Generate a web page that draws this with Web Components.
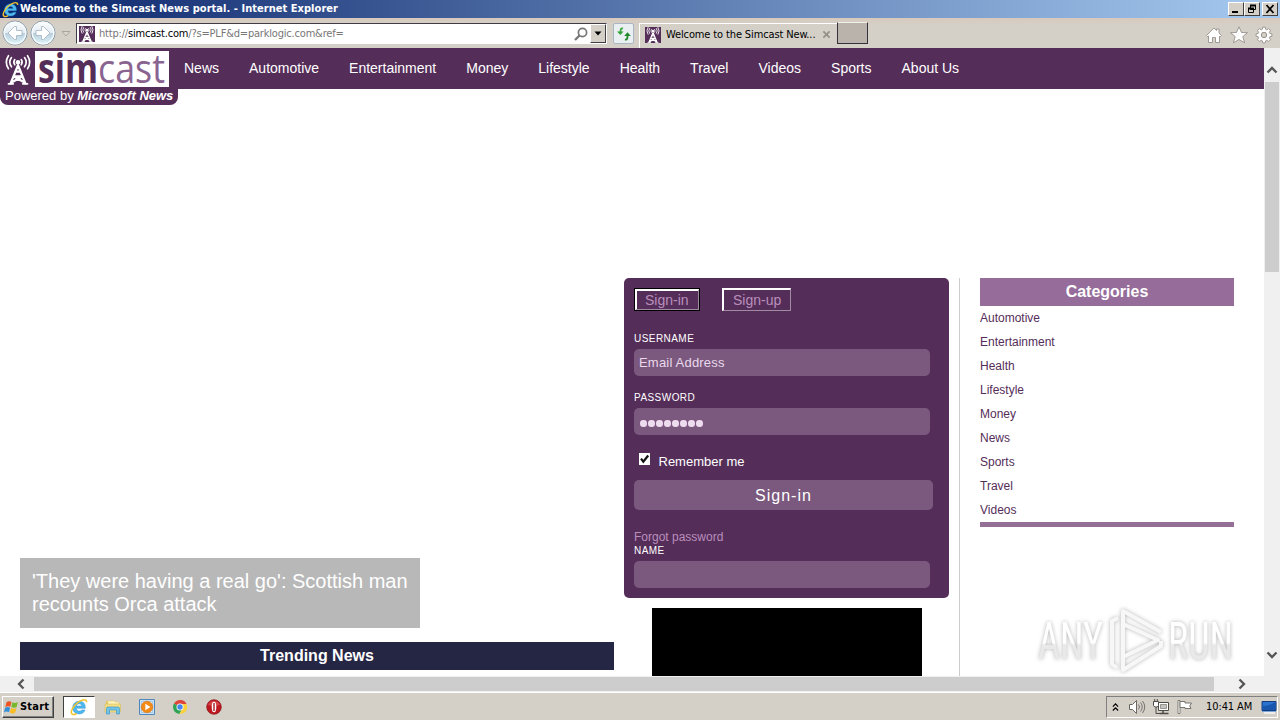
<!DOCTYPE html>
<html lang="en">

<head>
    <meta charset="utf-8">
    <title>Welcome to the Simcast News portal.</title>
    <style>
        body {
            margin: 0;
            width: 1280px;
            height: 720px;
            overflow: hidden;
            font-family: "Liberation Sans", Arial, sans-serif;
            background: #d4d0c8;
        }
    </style>
</head>

<body>
    <desktop-screen>
        <title-bar slot="title">Welcome to the Simcast News portal. - Internet Explorer</title-bar>
        <tool-bar slot="tools"></tool-bar>
        <news-page slot="page"></news-page>
        <task-bar slot="tasks"></task-bar>
    </desktop-screen>
</body>
<script>
    // small base class: every element just renders its own markup in a shadow root
    class BaseElement extends HTMLElement {
        constructor() {
            super();
            this.shadow = this.attachShadow({ mode: 'open' });
        }
        connectedCallback() {
            this.shadow.innerHTML = this.render();
        }
    }

    const antenna = `
        <g fill="none" stroke="currentColor" stroke-linecap="round">
            <path stroke-width="2.6" d="M13 12 4.5 33M13 12l8.500 21M7.600 25h10.800M5.500 32l12.300-7M20.500 32 8.200 25M9.800 19.500h6.400"/>
            <path stroke-width="1.900" d="M9.300 5.500q-2.200 3 0 6M16.700 5.500q2.200 3 0 6M5.500 3.200q-4 5.300 0 10.600M20.500 3.200q4 5.300 0 10.600M2 1q-5 7.500 0 15M24 1q5 7.500 0 15"/>
            <path stroke-width="2" d="M2 33.500h5.500M18.500 33.500H24"/>
        </g>
        <circle cx="13" cy="8.5" r="2.6" fill="currentColor"/>`;

    const icons = {
        antenna: ['-2 0 30 35', antenna],
        ie: ['0 0 18 18', `
            <path d="M15.300 10.300H6.300c.2 1.900 1.300 2.800 3 2.800 1.200 0 2-.5 2.500-1.200h3.200c-.8 2.600-3 4-5.800 4-3.800 0-6.500-2.400-6.500-6.200s2.700-6.500 6.500-6.500c4 0 6.500 2.800 6.100 7.100zM6.400 8h5.400c-.2-1.400-1.200-2.200-2.600-2.200S6.700 6.600 6.400 8z" fill="#4db9ee" stroke="#1f7fc8" stroke-width=".4"/>
            <path d="M2.500 16.300C-.8 14.500 3.600 7 9 3.700c4-2.500 7.800-3 7.600.5M2.500 16.300c1 .6 2.500.1 4-.8" fill="none" stroke="#f2c32d" stroke-width="1.500"/>`],
        back: ['0 0 26 26', `
            <defs><linearGradient id="g" x2="0" y2="1"><stop stop-color="#fff"/><stop offset=".48" stop-color="#e3ebf2"/><stop offset=".52" stop-color="#b9cfdd"/><stop offset="1" stop-color="#e2f8fc"/></linearGradient></defs>
            <circle cx="13" cy="13" r="12" fill="url(#g)" stroke="#8293a4"/><circle cx="13" cy="13" r="10.800" fill="none" stroke="#f3fafc" stroke-width="1.400"/>
            <path d="m12.500 6.500-6.500 6.500 6.500 6.500h2v-4h5.500v-5h-5.500v-4z" fill="#fff" stroke="#9fb2c0" stroke-width=".8"/>`],
        caret: ['0 0 10 8', '<path d="M1 1.500h8L5 6z" fill="#d9d6cf" stroke="#aaa69e"/>'],
        search: ['0 0 14 14', '<circle cx="8.500" cy="5.500" r="4.100" fill="none" stroke="#777" stroke-width="1.700"/><path d="m5.500 8.500-4.500 4.500" stroke="#777" stroke-width="2.300"/>'],
        refresh: ['0 0 16 16', '<path d="M7 2.500C4.500 2 4.500 4 4.500 6" fill="none" stroke="#3fa844" stroke-width="1.800"/><path d="M1 5.500h6.600L4.300 9z" fill="#34a13a"/><path d="M9 13.500c2.500.5 2.500-1.500 2.500-4" fill="none" stroke="#20872b" stroke-width="1.800"/><path d="M8.200 10h6.600L11.500 6.300z" fill="#20872b"/>'],
        close: ['0 0 10 10', '<path d="m1.500 1.500 7 7m0-7-7 7" stroke="#969188" stroke-width="2"/>'],
        home: ['0 0 18 18', '<path d="M1.500 9.500 9 2l2.500 2.500V3H14v4l2.500 2.500-1.300 1.200-.7-.7v6.500h-4v-5h-3v5h-4V10l-.7.700z" fill="#fff" stroke="#96918a" stroke-width=".9"/>'],
        star: ['0 0 18 18', '<path d="m9 .8 2.500 5.700 6 .2-4.700 3.900 1.800 6.200L9 13.500l-5.600 3.300 1.800-6.200L.5 6.700l6-.2z" fill="#fff" stroke="#96918a" stroke-width=".9"/>'],
        gear: ['0 0 18 18', `
            <path d="m7.700 1.200-.4 2.100-1.100.5-1.900-1.200-1.800 1.800 1.200 1.900-.5 1.100-2.100.4v2.500l2.100.4.5 1.100-1.200 1.900 1.800 1.800 1.900-1.200 1.100.5.400 2.100h2.600l.4-2.100 1.100-.5 1.900 1.200 1.800-1.800-1.200-1.900.5-1.100 2.100-.4V7.800l-2.100-.4-.5-1.100 1.200-1.900-1.800-1.800-1.900 1.200-1.100-.5-.4-2.100z" fill="#fff" stroke="#96918a" stroke-width=".9"/>
            <circle cx="9" cy="9" r="2.700" fill="#d4d0c8" stroke="#96918a"/>`],
        up: ['0 0 12 8', '<path d="m1.500 6.500 4.500-4.500 4.500 4.500" fill="none" stroke="#555" stroke-width="2.300"/>'],
        windows: ['0 0 16 15', '<path d="M2.500 2.200Q5 .5 7.500 2L6.300 6.700Q4 5.500 1.300 7z" fill="#ed5423"/><path d="M8.400 2.300q2.500 1.500 5.500-.2l-1.200 4.800q-2.700 1.500-5.400 0z" fill="#79b82d"/><path d="M1.100 7.800q2.700-1.500 5 0L5 12.300q-2.500-1.500-5 .2z" fill="#328fd8"/><path d="M7 8.100q2.800 1.400 5.500-.2l-1.300 4.900q-2.700 1.500-5.400-.2z" fill="#fbbd22"/>'],
        folder: ['0 0 18 18', '<path d="M2 3h5l1 1.500h6V9H2z" fill="#e7c65a"/><path d="M4 3h6l1 1h4v6H3z" fill="#fff6bd" stroke="#dfc769" stroke-width=".6"/><path d="M1 6h15.500v8H1z" fill="#f6df82" stroke="#d4bb61" stroke-width=".6"/><path d="M2.500 16V10.500q0-1.500 1.500-1.500h10q1.500 0 1.500 1.500V16h-3v-4h-7v4z" fill="#74c3e8" stroke="#399aca" stroke-width=".7"/>'],
        player: ['0 0 18 18', '<path d="M1.500 1.500h15v15h-15z" fill="#c8e1f5" stroke="#4f88bd"/><path d="M3.500 3.500h11v11h-11z" fill="#e8f1f8" stroke="#8ab3d4" stroke-width=".6"/><circle cx="9" cy="9" r="5.800" fill="#f28a16" stroke="#d96d0b" stroke-width=".5"/><path d="M7.300 5.700v6.600L12.500 9z" fill="#fff"/>'],
        chrome: ['0 0 18 18', '<path d="M9 9 3 5.500A7 7 0 0 1 15.500 6H9z" fill="#de4437"/><path d="M9 9 3 5.500A7 7 0 0 0 8.300 16L11.600 10.500z" fill="#2fa454"/><path d="M9 6h6.500A7 7 0 0 1 8.300 16l3.300-5.500z" fill="#f9d13d"/><circle cx="9" cy="9" r="3.500" fill="#fff"/><circle cx="9" cy="9" r="2.700" fill="#4688ee"/>'],
        opera: ['0 0 18 18', '<circle cx="9" cy="9" r="7.300" fill="#bd1720" stroke="#8b1216" stroke-width=".7"/><path d="M3 7a6.500 6.500 0 0 1 12 0q-6 2-12 0z" fill="#e56360" opacity=".6"/><ellipse cx="9" cy="9" rx="2.300" ry="5.300" fill="#fff"/><path d="M8.300 5h1.400v8H8.300z" fill="#a51a20"/>'],
        more: ['0 0 8 10', '<path d="m1 4.500 3-3 3 3m-6 4.500 3-3 3 3" fill="none" stroke="#000" stroke-width="1.400"/>'],
        sound: ['0 0 18 18', '<path d="M1.500 6.500h3l4-4v13l-4-4h-3z" fill="#fff" stroke="#6b6761"/><path d="M10.500 6.500q2 2.500 0 5M12.500 4.500q3.500 4.500 0 9M14.500 3q4.500 6 0 12" fill="none" stroke="#77736d"/>'],
        network: ['0 0 18 18', '<path d="M6.500 4.500h10v8h-10z" fill="#fff" stroke="#4e4b47"/><path d="M8.500 6.500h6v4h-6z" fill="#c5c3bd" stroke="#77736d" stroke-width=".7"/><path d="M11 12.500V15M7.500 15.500h9" stroke="#4e4b47" stroke-width="1.500"/><path d="M1.500 3.500h5v4l-1.300 1.500H2.800L1.500 7.500z" fill="#fff" stroke="#4e4b47"/><path d="M2.700 1v2.500M5.300 1v2.500M4 9v6.500h5" fill="none" stroke="#4e4b47"/>'],
        flag: ['0 0 18 18', '<path d="M2 2.500h2v13H2z" fill="#fff" stroke="#6b6761" stroke-width=".8"/><path d="M4 3.500h5v1.500h6.500l-1.800 3 1.300 2.500H9V9.500H4z" fill="#fff" stroke="#6b6761" stroke-width=".9"/>'],
        desktop: ['0 0 16 14', '<path d="M1 1.500h14v9H1z" fill="#2b72cf" stroke="#183b7c"/><path d="M1.500 10V6q7 0 13-4v8z" fill="#1957ae"/><path d="M3 13h11" stroke="#f7f7f7" stroke-width="1.500"/><path d="M1 11.500h14" stroke="#79a7dc"/>'],
        check: ['0 0 13 13', '<path d="M1 0h11v12H1z" fill="#fff"/><path d="m3 5.700 2.300 3L10.200 2.500" fill="none" stroke="#111" stroke-width="2.200"/>'],
        min: ['0 0 12 10', '<path d="M2 8h6" stroke="#000" stroke-width="2"/>'],
        restore: ['0 0 12 10', '<path d="M4.500 1.500h5v4h-5zM2.500 4.500h5v4h-5z" fill="#d4d0c8" stroke="#000"/><path d="M4 1.500h6M2 4.500h6" stroke="#000" stroke-width="1.800"/>'],
        exit: ['0 0 12 10', '<path d="m2.500 1 7 8m0-8-7 8" stroke="#000" stroke-width="1.800"/>'],
        drop: ['0 0 8 5', '<path d="M.5.500h7L4 4.500z" fill="#000"/>']
    };

    class PixelIcon extends BaseElement {
        render() {
            const [box, body] = icons[this.getAttribute('name')];
            const w = this.getAttribute('w') || 18;
            const h = this.getAttribute('h') || w;
            return `
            <style>
                :host { display: block; flex: none; width: ${w}px; height: ${h}px; }
                svg { display: block; overflow: visible; }
            </style>
            <svg width="${w}" height="${h}" viewBox="${box}">${body}</svg>`;
        }
    }
    customElements.define('pixel-icon', PixelIcon);

    class DesktopScreen extends BaseElement {
        render() {
            return `
            <style>
                :host {
                    display: grid;
                    grid-template-rows: 18px 30px 644px 28px;
                    width: 1280px;
                    height: 720px;
                }
            </style>
            <slot name="title"></slot>
            <slot name="tools"></slot>
            <slot name="page"></slot>
            <slot name="tasks"></slot>`;
        }
    }
    customElements.define('desktop-screen', DesktopScreen);

    class TitleBar extends BaseElement {
        render() {
            return `
            <style>
                :host {
                    display: flex;
                    box-sizing: border-box;
                    height: 18px;
                    padding: 0 2px;
                    align-items: center;
                    background: linear-gradient(90deg, #0a246a, #a6caf0);
                    color: #fff;
                    font: bold 11px/18px "DejaVu Sans Condensed", "DejaVu Sans", sans-serif;
                    font-stretch: condensed;
                    white-space: nowrap;
                }
                .text { flex: 1; padding-left: 1px; letter-spacing: .04px; }
                .btn {
                    box-sizing: border-box;
                    width: 16px;
                    height: 14px;
                    padding: 1px;
                    background: #d4d0c8;
                    border: 1px solid;
                    border-color: #fff #404040 #404040 #fff;
                }
                .last { margin-left: 2px; }
            </style>
            <pixel-icon name="ie" w="17"></pixel-icon>
            <span class="text"><slot></slot></span>
            <span class="btn"><pixel-icon name="min" w="12" h="10"></pixel-icon></span>
            <span class="btn"><pixel-icon name="restore" w="12" h="10"></pixel-icon></span>
            <span class="btn last"><pixel-icon name="exit" w="12" h="10"></pixel-icon></span>`;
        }
    }
    customElements.define('title-bar', TitleBar);

    class FavIcon extends BaseElement {
        render() {
            return `
            <style>
                :host { display: flex; flex: none; width: 16px; height: 16px; justify-content: center; background: #552d59; color: #fff; }
            </style>
            <pixel-icon name="antenna" w="14" h="16"></pixel-icon>`;
        }
    }
    customElements.define('fav-icon', FavIcon);

    class ToolBar extends BaseElement {
        render() {
            return `
            <style>
                :host {
                    display: flex;
                    box-sizing: border-box;
                    height: 30px;
                    padding: 0 7px 0 2px;
                    background: linear-gradient(#d8cabd, #d4d0c8 8px);
                    font: 11px/18px "DejaVu Sans Condensed", "DejaVu Sans", sans-serif;
                    font-stretch: condensed;
                    white-space: nowrap;
                }
                .nav { display: flex; width: 74px; padding-top: 2px; box-sizing: border-box; }
                .nav pixel-icon { margin-right: 2px; }
                .nav .fwd { transform: scaleX(-1); }
                .nav .caret { margin: 10px 0 0 3px; }
                .address {
                    display: flex;
                    box-sizing: border-box;
                    width: 531px;
                    height: 21px;
                    margin-top: 5px;
                    padding: 0 0 0 2px;
                    align-items: center;
                    background: #fff;
                    border: 1px solid #fff;
                    border-top: 1px solid #403c45;
                    border-left: 1px solid #403c45;
                    color: #777;
                }
                .url { flex: 1; padding-left: 4px; letter-spacing: -.19px; }
                .url b { font-weight: normal; color: #000; }
                .drop {
                    display: flex;
                    align-items: center;
                    justify-content: center;
                    width: 14px;
                    height: 17px;
                    margin-left: 2px;
                    background: #d4d0c8;
                    border: 1px solid;
                    border-color: #fff #404040 #404040 #fff;
                }
                .refresh {
                    display: flex;
                    box-sizing: border-box;
                    width: 21px;
                    height: 21px;
                    margin: 5px 0 0 6px;
                    align-items: center;
                    justify-content: center;
                    background: #eaf0f1;
                    border: 1px solid #a9b6c4;
                    border-radius: 2px;
                }
                .tab {
                    display: flex;
                    box-sizing: border-box;
                    width: 198px;
                    height: 25px;
                    margin: 5px 0 0 5px;
                    padding: 0 6px 3px 5px;
                    align-items: center;
                    border-top: 1px solid #fff;
                    border-left: 1px solid #fff;
                }
                .tab span { flex: 1; padding-left: 5px; letter-spacing: -.13px; }
                .blank {
                    box-sizing: border-box;
                    width: 31px;
                    height: 22px;
                    margin-top: 4px;
                    background: #bab3ab;
                    border: 1px solid #35313a;
                    border-top-color: #f2eee8;
                }
                .tools { display: flex; flex: 1; gap: 7px; justify-content: flex-end; padding-top: 8px; }
            </style>
            <div class="nav">
                <pixel-icon name="back" w="26"></pixel-icon>
                <pixel-icon class="fwd" name="back" w="26"></pixel-icon>
                <pixel-icon class="caret" name="caret" w="10" h="8"></pixel-icon>
            </div>
            <div class="address">
                <fav-icon></fav-icon>
                <span class="url">http://<b>simcast.com</b>/?s=PLF&amp;d=parklogic.com&amp;ref=</span>
                <pixel-icon name="search" w="14"></pixel-icon>
                <span class="drop"><pixel-icon name="drop" w="8" h="5"></pixel-icon></span>
            </div>
            <div class="refresh"><pixel-icon name="refresh" w="16"></pixel-icon></div>
            <div class="tab">
                <fav-icon></fav-icon>
                <span>Welcome to the Simcast New...</span>
                <pixel-icon name="close" w="9"></pixel-icon>
            </div>
            <div class="blank"></div>
            <div class="tools">
                <pixel-icon name="home" w="18"></pixel-icon>
                <pixel-icon name="star" w="18"></pixel-icon>
                <pixel-icon name="gear" w="18"></pixel-icon>
            </div>`;
        }
    }
    customElements.define('tool-bar', ToolBar);

    // the page with both of its scrollbars
    class NewsPage extends BaseElement {
        render() {
            return `
            <style>
                :host {
                    display: grid;
                    position: relative;
                    grid-template: 628px 16px / 1264px 16px;
                    background: #f0f0f0;
                }
                .view { background: #fff; height: 628px; }
                .columns { display: flex; box-sizing: border-box; height: 587px; overflow: hidden; padding: 189px 0 0 20px; }
                .left { width: 594px; padding-top: 280px; }
                .middle { width: 325px; margin: 0 10px; }
                .ad { width: 270px; height: 100px; margin: 10px 0 0 28px; background: #000; }
                .right { width: 254px; height: 450px; padding-left: 20px; border-left: 1px solid #ccc; }
                .vbar, .hbar { display: flex; align-items: center; }
                .vbar { flex-direction: column; }
                .vbar .thumb { width: 14px; height: 190px; margin: 8px 0 379px; background: #cdcdcd; }
                .vbar .first { margin-top: 18px; }
                .down { transform: rotate(180deg); }
                .hbar { padding-left: 15px; }
                .hbar .thumb { width: 1180px; height: 14px; margin: 0 22px 0 7px; background: #cdcdcd; }
                .prev { transform: rotate(-90deg); }
                .next { transform: rotate(90deg); }
            </style>
            <div class="view">
                <site-header></site-header>
                <div class="columns">
                    <div class="left">
                        <hero-story>'They were having a real go': Scottish man recounts Orca attack</hero-story>
                        <section-title style="--bar: #252544; margin-top: 14px">Trending News</section-title>
                    </div>
                    <div class="middle">
                        <login-panel></login-panel>
                        <div class="ad"></div>
                    </div>
                    <div class="right">
                        <category-list></category-list>
                    </div>
                </div>
            </div>
            <div class="vbar">
                <pixel-icon class="first" name="up" w="12" h="8"></pixel-icon>
                <div class="thumb"></div>
                <pixel-icon class="down" name="up" w="12" h="8"></pixel-icon>
            </div>
            <div class="hbar">
                <pixel-icon class="prev" name="up" w="12" h="8"></pixel-icon>
                <div class="thumb"></div>
                <pixel-icon class="next" name="up" w="12" h="8"></pixel-icon>
            </div>
            <any-watermark></any-watermark>`;
        }
    }
    customElements.define('news-page', NewsPage);

    class SiteHeader extends BaseElement {
        render() {
            const links = ['News', 'Automotive', 'Entertainment', 'Money', 'Lifestyle', 'Health', 'Travel', 'Videos', 'Sports', 'About Us'];
            return `
            <style>
                :host { display: block; position: relative; height: 41px; background: #552d59; color: #fff; }
                nav { display: flex; gap: 30px; padding-left: 184px; font-size: 14px; line-height: 41px; }
                /* the logo hangs below the bar */
                .logo {
                    position: absolute;
                    left: 0;
                    top: 0;
                    box-sizing: border-box;
                    width: 178px;
                    height: 57px;
                    padding: 3px 0 0 5px;
                    background: #552d59;
                    border-radius: 0 0 8px 8px;
                }
                .row { display: flex; gap: 4px; }
                .row pixel-icon { margin-top: 2px; }
                .name { width: 134px; height: 36px; background: #fff; }
                .name svg { display: block; overflow: visible; }
                .name text { font: 41px "Open Sans", "Noto Sans", sans-serif; fill: #8a6490; }
                .name .bold { font-weight: bold; fill: #552d59; }
                .by { padding-top: 1px; font-size: 13px; line-height: 16px; white-space: nowrap; }
            </style>
            <nav>${links.map(l => `<span>${l}</span>`).join('')}</nav>
            <div class="logo">
                <div class="row">
                    <pixel-icon name="antenna" w="26" h="34"></pixel-icon>
                    <div class="name">
                        <svg width="134" height="36">
                            <text class="bold" x="3" y="32" textLength="60" lengthAdjust="spacingAndGlyphs">sim</text>
                            <text x="63" y="32" textLength="67" lengthAdjust="spacingAndGlyphs">cast</text>
                        </svg>
                    </div>
                </div>
                <div class="by">Powered by <b><i>Microsoft News</i></b></div>
            </div>`;
        }
    }
    customElements.define('site-header', SiteHeader);

    class HeroStory extends BaseElement {
        render() {
            return `
            <style>
                :host {
                    display: block;
                    box-sizing: border-box;
                    width: 400px;
                    height: 70px;
                    padding: 12px;
                    background: #b8b8b8;
                    color: #fff;
                    font-size: 20px;
                    line-height: 23px;
                }
            </style>
            <slot></slot>`;
        }
    }
    customElements.define('hero-story', HeroStory);

    class SectionTitle extends BaseElement {
        render() {
            return `
            <style>
                :host {
                    display: block;
                    height: 28px;
                    background: var(--bar);
                    color: #fff;
                    font-size: 16px;
                    font-weight: bold;
                    line-height: 27px;
                    text-align: center;
                }
            </style>
            <slot></slot>`;
        }
    }
    customElements.define('section-title', SectionTitle);

    class FormField extends BaseElement {
        render() {
            return `
            <style>
                :host { display: block; width: 296px; }
                label { display: block; box-sizing: border-box; height: 17px; padding-top: 1px; color: #fff; font-size: 10px; line-height: 12px; letter-spacing: .45px; }
                .box {
                    box-sizing: border-box;
                    height: 27px;
                    padding-left: 5px;
                    background: #7b597e;
                    border-radius: 5px;
                    color: #ead9ec;
                    font-size: 13px;
                    line-height: 27px;
                    letter-spacing: .2px;
                }
            </style>
            <label>${this.getAttribute('label')}</label>
            <div class="box"><slot></slot></div>`;
        }
    }
    customElements.define('form-field', FormField);

    class LoginPanel extends BaseElement {
        render() {
            return `
            <style>
                :host {
                    display: block;
                    box-sizing: border-box;
                    height: 320px;
                    padding: 10px 10px 0;
                    background: #552d59;
                    border-radius: 5px;
                    color: #fff;
                }
                .switch { display: flex; height: 44px; gap: 23px; align-items: flex-start; }
                .switch span {
                    box-sizing: border-box;
                    width: 69px;
                    height: 23px;
                    padding: 0 8px 0 9px;
                    border: 2px solid;
                    border-width: 2px 1px 1px 2px;
                    border-color: #fff #a08ba2 #a08ba2 #fff;
                    color: #b98fbc;
                    font-size: 14px;
                    line-height: 20px;
                }
                .switch .on { width: 64px; height: 21px; margin: 1px 0 0 1px; padding: 0 8px; line-height: 19px; box-shadow: 0 0 0 1px #000; }
                .pass { margin-top: 15px; }
                .dots { display: flex; gap: 1.500px; padding: 12px 0 0 1px; }
                .dots i { width: 6.500px; height: 6.500px; border-radius: 50%; background: #f0dcf1; }
                .remember { display: flex; height: 26px; margin: 18px 0 1px 4px; font-size: 13px; line-height: 17px; }
                .remember span { padding-left: 7.500px; }
                .submit {
                    box-sizing: border-box;
                    width: 299px;
                    height: 30px;
                    padding-top: 1px;
                    background: #7b597e;
                    border-radius: 5px;
                    font-size: 16px;
                    line-height: 30px;
                    letter-spacing: 1px;
                    text-align: center;
                }
                .forgot { margin-top: 20px; color: #b98fbc; font-size: 12px; line-height: 14px; }
            </style>
            <div class="switch"><span class="on">Sign-in</span><span>Sign-up</span></div>
            <form-field label="USERNAME">Email Address</form-field>
            <form-field class="pass" label="PASSWORD">
                <div class="dots"><i></i><i></i><i></i><i></i><i></i><i></i><i></i><i></i></div>
            </form-field>
            <div class="remember"><pixel-icon name="check" w="13"></pixel-icon><span>Remember me</span></div>
            <div class="submit">Sign-in</div>
            <div class="forgot">Forgot password</div>
            <form-field label="NAME"></form-field>`;
        }
    }
    customElements.define('login-panel', LoginPanel);

    class CategoryList extends BaseElement {
        render() {
            const names = ['Automotive', 'Entertainment', 'Health', 'Lifestyle', 'Money', 'News', 'Sports', 'Travel', 'Videos'];
            return `
            <style>
                :host { display: block; border-bottom: 5px solid #947097; color: #552d59; font-size: 12px; line-height: 24px; }
            </style>
            <section-title style="--bar: #956c9a">Categories</section-title>
            ${names.map(n => `<div>${n}</div>`).join('')}`;
        }
    }
    customElements.define('category-list', CategoryList);

    class AnyWatermark extends BaseElement {
        render() {
            return `
            <style>
                :host { display: block; position: absolute; left: 1034px; top: 559px; }
                svg { display: block; overflow: visible; filter: drop-shadow(0 0 2px #b4b4b4); }
                text { font: 52px "Roboto", sans-serif; font-stretch: condensed; }
            </style>
            <svg width="204" height="66" viewBox="0 0 204 66">
                <defs><linearGradient id="w" x2="0" y2="1"><stop offset=".52" stop-color="#fff"/><stop offset=".56" stop-color="#e9e9e9"/></linearGradient></defs>
                <g fill="url(#w)">
                    <text x="4" y="52" textLength="65" lengthAdjust="spacingAndGlyphs">ANY</text>
                    <text x="134" y="52" textLength="65" lengthAdjust="spacingAndGlyphs">RUN</text>
                </g>
                <g fill="none" stroke="#f7f7f7" stroke-width="4" stroke-linejoin="round">
                    <path d="M89 17v33l35-17z"/>
                    <path d="M89 17V4l38 21"/>
                    <path d="M84 11l-6 3v43l5 4M89 50v13l38-24V34"/>
                </g>
            </svg>`;
        }
    }
    customElements.define('any-watermark', AnyWatermark);

    class TaskBar extends BaseElement {
        render() {
            return `
            <style>
                :host {
                    display: flex;
                    box-sizing: border-box;
                    height: 28px;
                    padding: 3px 2px 0;
                    background: #d4d0c8;
                    border-top: 1px solid #fff;
                    font: 11px/20px "DejaVu Sans Condensed", "DejaVu Sans", sans-serif;
                    font-stretch: condensed;
                    white-space: nowrap;
                }
                .start, .open, .tray { display: flex; box-sizing: border-box; height: 22px; align-items: center; border: 1px solid; }
                .start {
                    width: 52px;
                    padding-left: 1px;
                    border-color: #fff #404040 #404040 #fff;
                    box-shadow: inset -1px -1px #808080;
                    font-weight: bold;
                    letter-spacing: .2px;
                }
                .open { width: 32px; margin: 0 9px; justify-content: center; background: #fff; border-color: #404040 #fff #fff #404040; }
                .apps { display: flex; flex: 1; gap: 15.700px; padding-top: 2px; }
                .tray { width: 172px; padding-left: 5px; border-color: #808080 #fff #fff #808080; }
                .tray .sound { margin-left: 9px; }
                .tray .next { margin-left: 6px; }
                .time { flex: 1; padding-left: 12px; letter-spacing: -.1px; }
            </style>
            <div class="start"><pixel-icon name="windows" w="16" h="15"></pixel-icon><span>Start</span></div>
            <div class="open"><pixel-icon name="ie" w="18"></pixel-icon></div>
            <div class="apps">
                <pixel-icon name="folder" w="18"></pixel-icon>
                <pixel-icon name="player" w="18"></pixel-icon>
                <pixel-icon name="chrome" w="18"></pixel-icon>
                <pixel-icon name="opera" w="18"></pixel-icon>
            </div>
            <div class="tray">
                <pixel-icon name="more" w="7" h="10"></pixel-icon>
                <pixel-icon class="sound" name="sound" w="18"></pixel-icon>
                <pixel-icon class="next" name="network" w="18"></pixel-icon>
                <pixel-icon class="next" name="flag" w="18"></pixel-icon>
                <span class="time">10:41 AM</span>
                <pixel-icon name="desktop" w="16" h="14"></pixel-icon>
            </div>`;
        }
    }
    customElements.define('task-bar', TaskBar);
</script>

</html>
